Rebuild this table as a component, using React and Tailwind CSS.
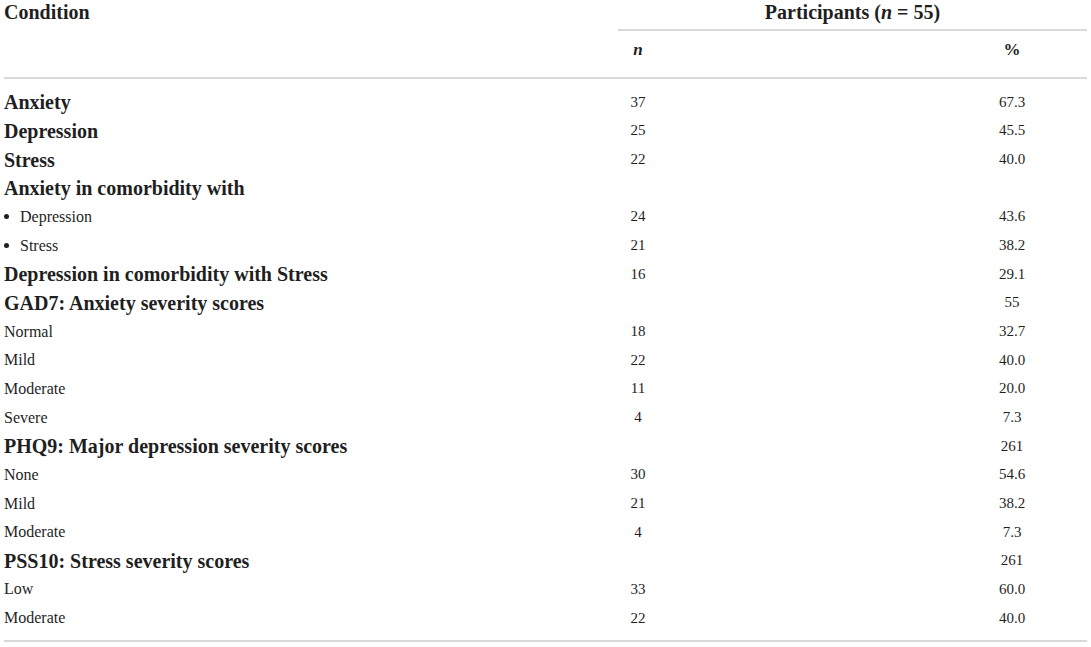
import React from 'react';

const rows = [
  { label: 'Anxiety', bold: true, n: '37', p: '67.3' },
  { label: 'Depression', bold: true, n: '25', p: '45.5' },
  { label: 'Stress', bold: true, n: '22', p: '40.0' },
  { label: 'Anxiety in comorbidity with', bold: true, n: '', p: '' },
  { label: 'Depression', bullet: true, n: '24', p: '43.6' },
  { label: 'Stress', bullet: true, n: '21', p: '38.2' },
  { label: 'Depression in comorbidity with Stress', bold: true, n: '16', p: '29.1' },
  { label: 'GAD7: Anxiety severity scores', bold: true, n: '', p: '55' },
  { label: 'Normal', n: '18', p: '32.7' },
  { label: 'Mild', n: '22', p: '40.0' },
  { label: 'Moderate', n: '11', p: '20.0' },
  { label: 'Severe', n: '4', p: '7.3' },
  { label: 'PHQ9: Major depression severity scores', bold: true, n: '', p: '261' },
  { label: 'None', n: '30', p: '54.6' },
  { label: 'Mild', n: '21', p: '38.2' },
  { label: 'Moderate', n: '4', p: '7.3' },
  { label: 'PSS10: Stress severity scores', bold: true, n: '', p: '261' },
  { label: 'Low', n: '33', p: '60.0' },
  { label: 'Moderate', n: '22', p: '40.0' },
];

const cols = 'grid grid-cols-[614px_40px_308px_92px_29px]';

function Row({ r }) {
  return (
    <div className={`${cols} h-[28.67px] items-center`}>
      <div className={r.bold ? 'text-[20px] font-bold leading-none' : 'text-[16px] leading-none'}>
        {r.bullet ? (
          <span className="flex items-center">
            <span className="mr-[11px] w-[5px] h-[5px] rounded-full bg-[#1f1f1f]" />
            <span>{r.label}</span>
          </span>
        ) : r.label}
      </div>
      <div className="text-center text-[15px] leading-none">{r.n}</div>
      <div />
      <div className="text-center text-[15px] leading-none">{r.p}</div>
      <div />
    </div>
  );
}

export default function App() {
  return (
    <div className="bg-white w-[1091px] h-[647px] text-[#1f1f1f]" style={{ fontFamily: '"Liberation Serif", "Times New Roman", serif' }}>
      <div className="ml-[4px] w-[1083px]">
        <div className={`${cols} grid-rows-[31px_46px] border-b-2 border-[#d9d9d9]`}>
          <div className="row-span-2 pt-[1px] text-[20px] font-bold leading-[22px]">Condition</div>
          <div className="col-start-2 col-span-4 border-b-2 border-[#d9d9d9] text-center text-[20px] font-bold leading-[22px] pt-[1px]">
            Participants (<i>n</i> = 55)
          </div>
          <div className="col-start-2 row-start-2 self-center mb-[9px] text-center text-[17px] font-bold italic">n</div>
          <div className="col-start-4 row-start-2 self-center mb-[9px] text-center text-[17px] font-bold">%</div>
        </div>
        <div className="pt-[9px] pb-[8px] border-b-2 border-[#d9d9d9]">
          {rows.map((r, i) => <Row key={i} r={r} />)}
        </div>
      </div>
    </div>
  );
}
